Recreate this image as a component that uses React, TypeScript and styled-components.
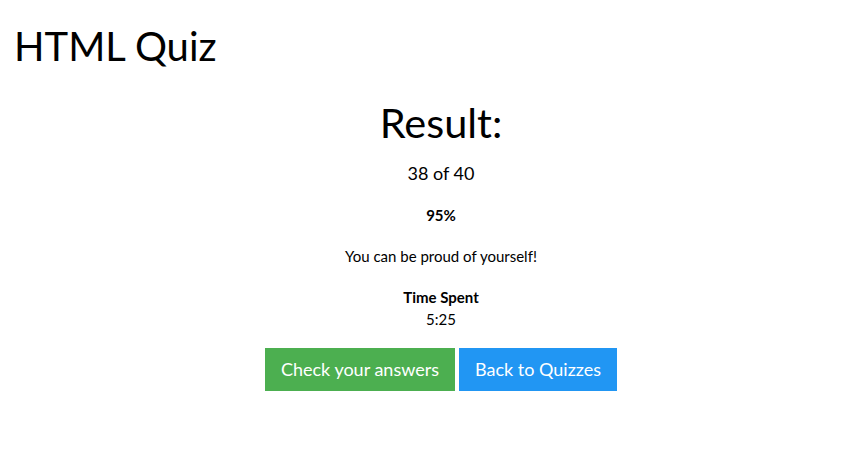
import React from "react";
import styled, { createGlobalStyle } from "styled-components";

const Global = createGlobalStyle`
  html, body { margin: 0; padding: 0; background: #fff; }
  body {
    font-family: Lato, "Liberation Sans", Arial, sans-serif;
    font-size: 15px;
    line-height: 1.5;
    color: #000;
  }
`;

const Page = styled.div`
  padding: 16px 0 0 14px;
`;

const Title = styled.h1`
  margin: 0;
  font-size: 40px;
  font-weight: 400;
  line-height: 60px;
`;

const Result = styled.section`
  margin-left: 18px;
  display: flex;
  flex-direction: column;
  align-items: center;
  text-align: center;
`;

const Heading = styled.h2`
  margin: 16px 0 0;
  font-size: 41.5px;
  font-weight: 400;
  line-height: 60px;
`;

const Score = styled.p`
  margin: 8px 0 0;
  font-size: 18px;
  line-height: 27px;
`;

const Line = styled.p<{ $bold?: boolean; $gap?: number }>`
  margin: ${(p) => p.$gap ?? 0}px 0 0;
  font-size: 15px;
  line-height: 22px;
  font-weight: ${(p) => (p.$bold ? 700 : 400)};
`;

const Buttons = styled.div`
  margin-top: 18px;
  display: flex;
  gap: 4px;
`;

const Button = styled.button<{ $color: string }>`
  border: none;
  margin: 0;
  padding: 8px 16px;
  font-family: inherit;
  font-size: 18px;
  line-height: 27px;
  color: #fff;
  background: ${(p) => p.$color};
  cursor: pointer;
`;

export default function App() {
  return (
    <>
      <Global />
      <Page>
        <Title>HTML Quiz</Title>
        <Result>
          <Heading>Result:</Heading>
          <Score>38 of 40</Score>
          <Line $bold $gap={17}>95%</Line>
          <Line $gap={19}>You can be proud of yourself!</Line>
          <Line $bold $gap={19}>Time Spent</Line>
          <Line>5:25</Line>
          <Buttons>
            <Button $color="#4CAF50">Check your answers</Button>
            <Button $color="#2196F3">Back to Quizzes</Button>
          </Buttons>
        </Result>
      </Page>
    </>
  );
}
